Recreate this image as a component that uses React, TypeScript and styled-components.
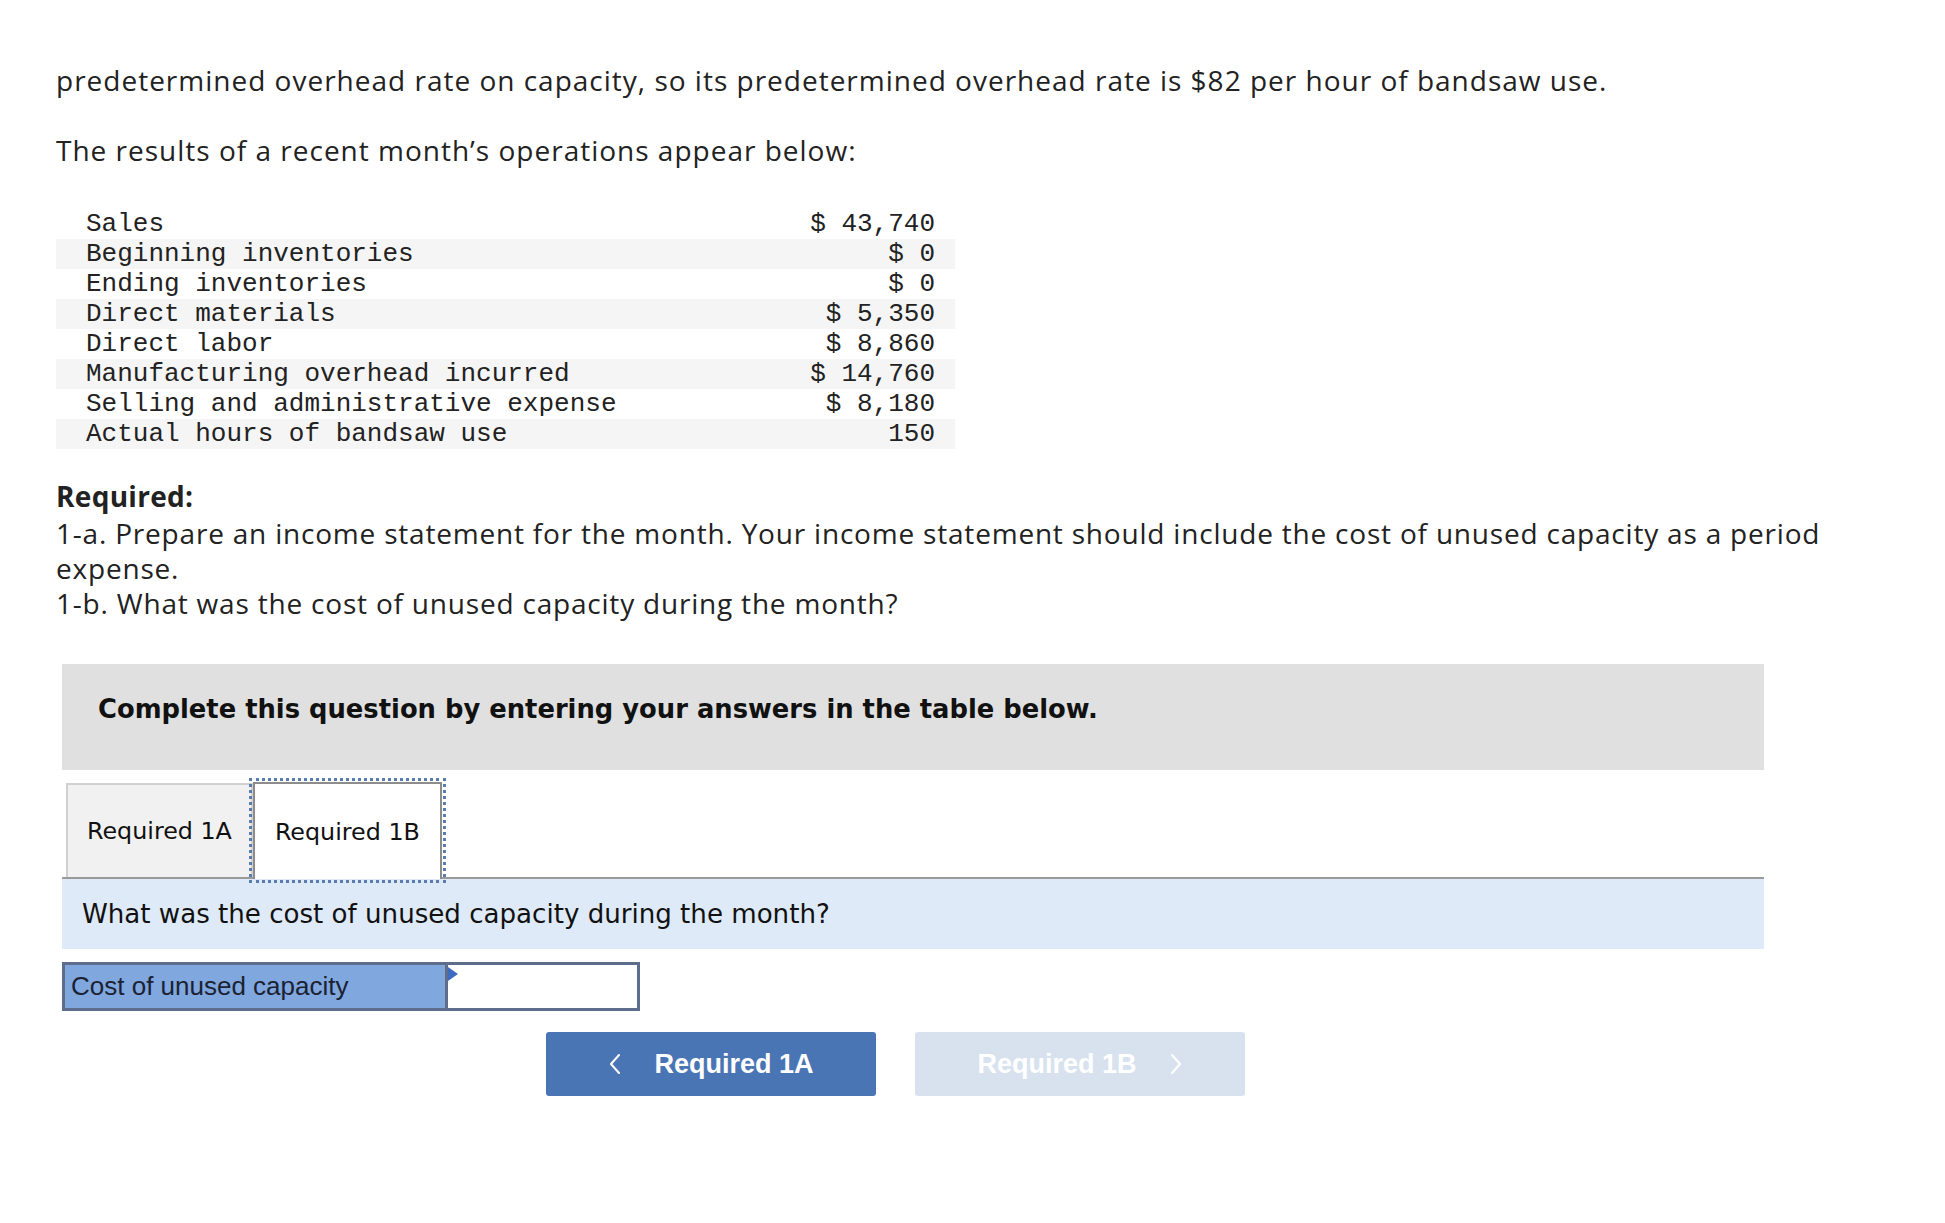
import React from 'react'
import styled, { createGlobalStyle } from 'styled-components'

const GlobalStyle = createGlobalStyle`
  html, body {
    margin: 0;
    padding: 0;
    background: #ffffff;
  }
`

const rows = [
  { label: 'Sales', value: '$ 43,740' },
  { label: 'Beginning inventories', value: '$ 0' },
  { label: 'Ending inventories', value: '$ 0' },
  { label: 'Direct materials', value: '$ 5,350' },
  { label: 'Direct labor', value: '$ 8,860' },
  { label: 'Manufacturing overhead incurred', value: '$ 14,760' },
  { label: 'Selling and administrative expense', value: '$ 8,180' },
  { label: 'Actual hours of bandsaw use', value: '150' },
]

const Chevron = ({ dir }: { dir: 'left' | 'right' }) => (
  <svg width="14" height="22" viewBox="0 0 14 22" fill="none">
    <polyline
      points={dir === 'left' ? '11,2 3,11 11,20' : '3,2 11,11 3,20'}
      stroke="currentColor"
      strokeWidth="2"
      strokeLinecap="round"
      strokeLinejoin="round"
    />
  </svg>
)

const App = () => {
  return (
    <Page>
      <GlobalStyle />
      <Text>
        predetermined overhead rate on capacity, so its predetermined overhead rate is $82 per hour of bandsaw use.
      </Text>
      <Text>The results of a recent month’s operations appear below:</Text>

      <DataTable>
        {rows.map((r, i) => (
          <DataRow key={r.label} striped={i % 2 === 1}>
            <span>{r.label}</span>
            <Value>{r.value}</Value>
          </DataRow>
        ))}
      </DataTable>

      <Required>
        <Heading>Required:</Heading>
        <div>1-a. Prepare an income statement for the month. Your income statement should include the cost of unused capacity as a period expense.</div>
        <div>1-b. What was the cost of unused capacity during the month?</div>
      </Required>

      <Question>
        <Instruction>Complete this question by entering your answers in the table below.</Instruction>

        <TabBar>
          <Tab>Required 1A</Tab>
          <Tab active>Required 1B</Tab>
        </TabBar>
        <Prompt>What was the cost of unused capacity during the month?</Prompt>

        <AnswerRow>
          <AnswerLabel>Cost of unused capacity</AnswerLabel>
          <AnswerCell>
            <Marker />
            <AnswerInput type="text" />
          </AnswerCell>
        </AnswerRow>

        <NavRow>
          <NavButton>
            <Chevron dir="left" />
            <span>Required 1A</span>
          </NavButton>
          <NavButton disabled>
            <span>Required 1B</span>
            <Chevron dir="right" />
          </NavButton>
        </NavRow>
      </Question>
    </Page>
  )
}

const Page = styled.div`
  padding: 63px 40px 120px 56px;
  color: #222222;
  font-family: "Open Sans", Lato, sans-serif;
`
const Text = styled.p`
  margin: 0 0 35px;
  font-size: 28px;
  letter-spacing: 1px;
  line-height: 35px;
`
const DataTable = styled.div`
  width: 899px;
  margin-top: 41px;
  font-family: "Liberation Mono", monospace;
  font-size: 26px;
`
const DataRow = styled.div<{ striped?: boolean }>`
  display: flex;
  justify-content: space-between;
  align-items: center;
  height: 30px;
  padding: 0 20px 0 30px;
  background: ${p => (p.striped ? '#f5f5f5' : 'transparent')};
`
const Value = styled.span`
  text-align: right;
`
const Required = styled.div`
  margin-top: 30px;
  max-width: 1840px;
  font-size: 28px;
  letter-spacing: 0.8px;
  line-height: 35px;
`
const Heading = styled.div`
  font-weight: 700;
  letter-spacing: 0.3px;
  margin-bottom: 2px;
`
const Question = styled.div`
  width: 1702px;
  margin: 43px 0 0 6px;
`
const Instruction = styled.div`
  background: #e0e0e0;
  height: 106px;
  box-sizing: border-box;
  padding: 30px 36px 0;
  font-family: "DejaVu Sans", Verdana, sans-serif;
  font-weight: 700;
  font-size: 25.8px;
  line-height: 30px;
  color: #111111;
`
const TabBar = styled.div`
  display: flex;
  align-items: flex-end;
  margin-top: 12px;
  padding-left: 4px;
  border-bottom: 2px solid #9a9a9a;
  height: 97px;
  box-sizing: border-box;
`
const Tab = styled.div<{ active?: boolean }>`
  display: flex;
  align-items: center;
  box-sizing: border-box;
  padding: 0 ${p => (p.active ? 20 : 19)}px;
  font-family: "DejaVu Sans", Verdana, sans-serif;
  font-size: 23.8px;
  color: #111111;
  height: ${p => (p.active ? 97 : 94)}px;
  margin-bottom: ${p => (p.active ? -2 : 0)}px;
  background: ${p => (p.active ? '#ffffff' : '#f1f1f1')};
  border: 2px solid ${p => (p.active ? '#8c8c8c' : '#d0d0d0')};
  border-bottom: none;
  outline: ${p => (p.active ? '3px dotted #5a7bb0' : 'none')};
  outline-offset: 1px;
`
const Prompt = styled.div`
  background: #deeaf7;
  height: 70px;
  display: flex;
  align-items: center;
  padding-left: 20px;
  font-family: "DejaVu Sans", Verdana, sans-serif;
  font-size: 26.1px;
  color: #111111;
`
const AnswerRow = styled.div`
  display: flex;
  width: 578px;
  height: 49px;
  margin-top: 13px;
  box-sizing: border-box;
  border: 3px solid #5f6d8d;
`
const AnswerLabel = styled.div`
  flex: 0 0 383px;
  box-sizing: border-box;
  background: #80a7de;
  border-right: 3px solid #5f6d8d;
  display: flex;
  align-items: center;
  padding-left: 6px;
  font-family: "Liberation Sans", Arial, sans-serif;
  font-size: 26px;
  color: #1b2233;
`
const AnswerCell = styled.div`
  position: relative;
  flex: 1;
  background: #ffffff;
`
const Marker = styled.div`
  position: absolute;
  left: 0;
  top: 2px;
  width: 0;
  height: 0;
  border-top: 7px solid transparent;
  border-bottom: 7px solid transparent;
  border-left: 10px solid #3d6bbf;
`
const AnswerInput = styled.input`
  width: 100%;
  height: 100%;
  box-sizing: border-box;
  border: none;
  outline: none;
  background: transparent;
  padding: 0 8px;
  font-size: 22px;
`
const NavRow = styled.div`
  display: flex;
  justify-content: center;
  gap: 39px;
  margin-top: 21px;
  padding-right: 35px;
`
const NavButton = styled.button`
  width: 330px;
  height: 64px;
  border: none;
  border-radius: 3px;
  background: ${p => (p.disabled ? '#d8e2ef' : '#4a75b5')};
  color: #ffffff;
  display: flex;
  align-items: center;
  justify-content: center;
  gap: 32px;
  font-family: "Liberation Sans", Arial, sans-serif;
  font-weight: 700;
  font-size: 27px;
  cursor: ${p => (p.disabled ? 'default' : 'pointer')};
  padding: 0;
`

export default App
